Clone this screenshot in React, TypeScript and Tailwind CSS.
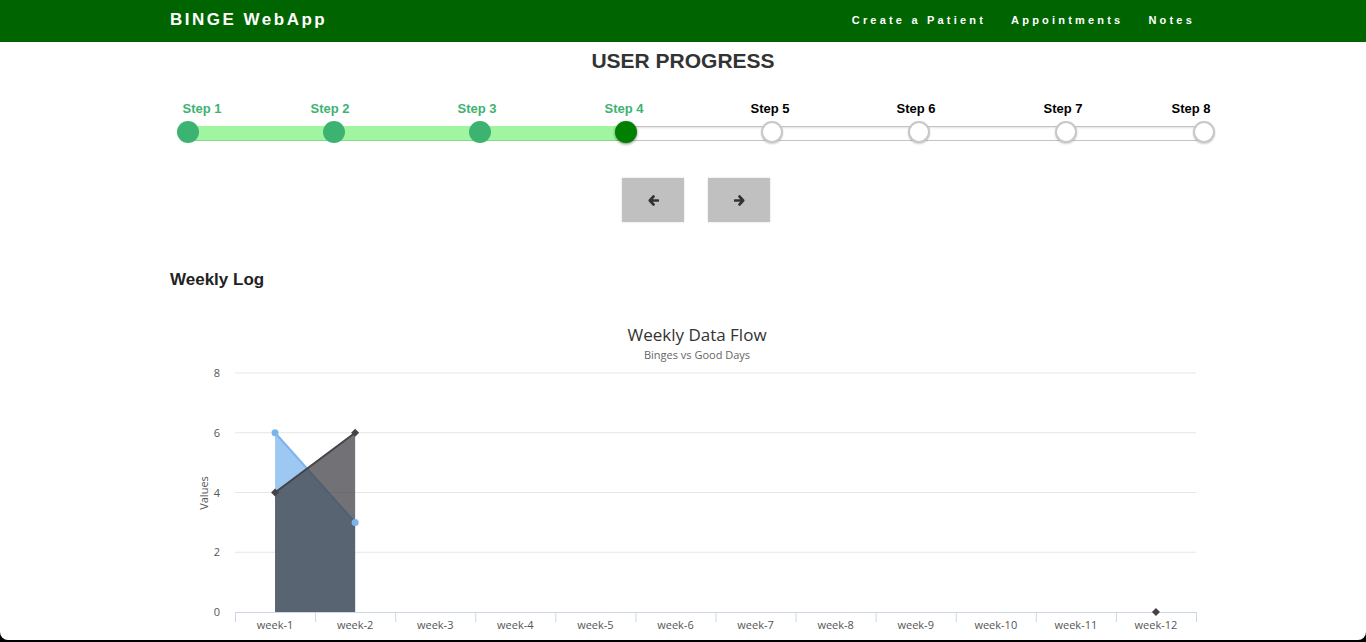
import React from 'react';

const steps = [
  { label: 'Step 1', labelX: 202, dotX: 188 },
  { label: 'Step 2', labelX: 330, dotX: 334 },
  { label: 'Step 3', labelX: 477, dotX: 480 },
  { label: 'Step 4', labelX: 624, dotX: 626 },
  { label: 'Step 5', labelX: 770, dotX: 772 },
  { label: 'Step 6', labelX: 916, dotX: 919 },
  { label: 'Step 7', labelX: 1063, dotX: 1066 },
  { label: 'Step 8', labelX: 1191, dotX: 1204 },
];
const current = 3;

function Arrow({ dir }: { dir: 'left' | 'right' }) {
  return (
    <svg width="11" height="11" viewBox="0 0 11 11" className={dir === 'right' ? 'rotate-180' : ''}>
      <path d="M5.5 1.5 L1.8 5.5 L5.5 9.5 M2 5.5 H10" stroke="#333333" strokeWidth="2.6" fill="none" strokeLinecap="round" strokeLinejoin="round" />
    </svg>
  );
}

function Stepper() {
  const first = steps[0].dotX;
  const last = steps[steps.length - 1].dotX;
  const active = steps[current].dotX;
  return (
    <div className="relative h-[46px] mt-[27px]">
      {steps.map((s, i) => (
        <span
          key={s.label}
          className={`absolute top-[1px] -translate-x-1/2 text-[13px] font-bold leading-4 whitespace-nowrap ${i <= current ? 'text-[#3cb371]' : 'text-black'}`}
          style={{ left: s.labelX }}
        >
          {s.label}
        </span>
      ))}
      <div
        className="absolute top-[26px] h-[15px] bg-white border border-[#c4c4c4] shadow-[inset_0_1px_2px_rgba(0,0,0,0.12)]"
        style={{ left: active, width: last - active }}
      />
      <div
        className="absolute top-[26px] h-[15px] bg-[#a0f5a0] border-b border-[#8ad88a]"
        style={{ left: first, width: active - first }}
      />
      {steps.map((s, i) => (
        <span
          key={s.label + '-dot'}
          className={`absolute top-[21px] w-[22px] h-[22px] -ml-[11px] rounded-full ${
            i < current
              ? 'bg-[#3cb371]'
              : i === current
              ? 'bg-[#008000] shadow-[0_1px_3px_rgba(0,0,0,0.5)]'
              : 'bg-white border-2 border-[#c8c8c8] shadow-[0_1px_2px_rgba(0,0,0,0.2)]'
          }`}
          style={{ left: s.dotX }}
        />
      ))}
    </div>
  );
}

// chart geometry (svg placed at x=170, y=310)
const X0 = 65;
const X1 = 1026;
const catW = (X1 - X0) / 12;
const yOf = (v: number) => 302 - 29.875 * v;
const cx = (i: number) => X0 + catW * (i + 0.5);

function WeeklyChart() {
  const blue = [6, 3];
  const dark = [4, 6];
  const weeks = Array.from({ length: 12 }, (_, i) => `week-${i + 1}`);
  const font = '"Open Sans", "DejaVu Sans", sans-serif';
  return (
    <svg width={1056} height={332} className="block ml-[170px] mt-[20px]" style={{ fontFamily: font }}>
      <text x={527} y={31} textAnchor="middle" fontSize={17} fill="#333333">
        Weekly Data Flow
      </text>
      <text x={527} y={49} textAnchor="middle" fontSize={11} fill="#666666">
        Binges vs Good Days
      </text>
      {[0, 2, 4, 6, 8].map((v) => (
        <g key={v}>
          {v > 0 && <line x1={X0} x2={X1} y1={yOf(v)} y2={yOf(v)} stroke="#e6e6e6" />}
          <text x={50} y={yOf(v) + 4} textAnchor="end" fontSize={11} fill="#555555">
            {v}
          </text>
        </g>
      ))}
      <text
        x={38}
        y={183}
        textAnchor="middle"
        fontSize={11}
        fill="#555555"
        transform="rotate(-90 38 183)"
      >
        Values
      </text>

      <line x1={X0} x2={X1} y1={302.5} y2={302.5} stroke="#ccd6eb" />
      {Array.from({ length: 13 }, (_, k) => (
        <line key={k} x1={X0 + catW * k + 0.5} x2={X0 + catW * k + 0.5} y1={302} y2={312} stroke="#ccd6eb" />
      ))}
      {weeks.map((w, i) => (
        <text key={w} x={cx(i)} y={319} textAnchor="middle" fontSize={11} fill="#555555">
          {w}
        </text>
      ))}

      {/* blue series */}
      <path
        d={`M${cx(0)},${yOf(blue[0])} L${cx(1)},${yOf(blue[1])} L${cx(1)},${yOf(0)} L${cx(0)},${yOf(0)} Z`}
        fill="#7cb5ec"
        fillOpacity={0.75}
      />
      <path d={`M${cx(0)},${yOf(blue[0])} L${cx(1)},${yOf(blue[1])}`} stroke="#7cb5ec" strokeWidth={2} fill="none" />

      {/* dark series */}
      <path
        d={`M${cx(0)},${yOf(dark[0])} L${cx(1)},${yOf(dark[1])} L${cx(1)},${yOf(0)} L${cx(0)},${yOf(0)} Z`}
        fill="#434348"
        fillOpacity={0.75}
      />
      <path d={`M${cx(0)},${yOf(dark[0])} L${cx(1)},${yOf(dark[1])}`} stroke="#434348" strokeWidth={2} fill="none" />

      {blue.map((v, i) => (
        <circle key={'b' + i} cx={cx(i)} cy={yOf(v)} r={3.5} fill="#7cb5ec" />
      ))}
      {[...dark.map((v, i) => [i, v]), [11, 0]].map(([i, v]) => (
        <path
          key={'d' + i}
          d={`M${cx(i)},${yOf(v) - 4} L${cx(i) + 4},${yOf(v)} L${cx(i)},${yOf(v) + 4} L${cx(i) - 4},${yOf(v)} Z`}
          fill="#434348"
        />
      ))}
    </svg>
  );
}

export default function App() {
  return (
    <div className="h-[642px] bg-black" style={{ fontFamily: '"Liberation Sans", Arial, sans-serif' }}>
      <div className="h-[640px] bg-white rounded-b-[8px] overflow-hidden">
        <nav className="h-[42px] bg-[#006400] flex items-center justify-between pl-[170px] pr-[171px] text-white font-bold">
          <span className="text-[17px] tracking-[2.5px] -mt-[2px]">BINGE WebApp</span>
          <div className="flex items-center gap-[25px] text-[11px] tracking-[3.2px] -mt-[2px]">
            <span>Create a Patient</span>
            <span>Appointments</span>
            <span>Notes</span>
          </div>
        </nav>

        <h1 className="mt-[7px] text-center text-[21px] leading-6 font-bold text-[#333333]">USER PROGRESS</h1>

        <Stepper />

        <div className="flex gap-[24px] ml-[622px] mt-[32px]">
          <button className="w-[62px] h-[44px] bg-[#c0c0c0] flex items-center justify-center shadow-[0_0_2px_rgba(0,0,0,0.15)]">
            <Arrow dir="left" />
          </button>
          <button className="w-[62px] h-[44px] bg-[#c0c0c0] flex items-center justify-center shadow-[0_0_2px_rgba(0,0,0,0.15)]">
            <Arrow dir="right" />
          </button>
        </div>

        <h2 className="ml-[170px] mt-[48px] text-[17px] leading-5 font-bold text-[#222222]">Weekly Log</h2>

        <WeeklyChart />
      </div>
    </div>
  );
}
